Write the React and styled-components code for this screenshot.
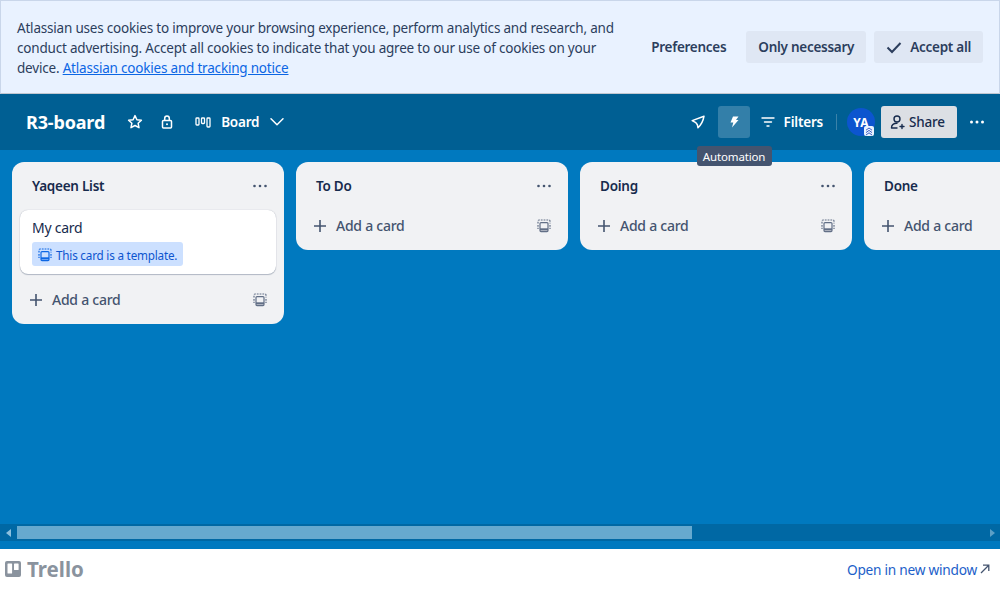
import React from 'react'
import styled, { createGlobalStyle } from 'styled-components'

const GlobalStyle = createGlobalStyle`
  html, body { margin: 0; padding: 0; height: 100%; overflow: hidden; }
  body { font-family: "Noto Sans", "Open Sans", "Liberation Sans", sans-serif; color: #172b4d; }
  * { box-sizing: border-box; }
`

const Page = styled.div`
  display: flex;
  flex-direction: column;
  width: 1000px;
  height: 589px;
  overflow: hidden;
`

const Banner = styled.div`
  display: flex;
  align-items: center;
  justify-content: space-between;
  height: 94px;
  padding: 0 16px;
  background: #e9f2ff;
  border: 1px solid #c9d6ea;
  border-bottom-color: #c1c7d0;
`
const BannerText = styled.p`
  width: 610px;
  margin: 2px 0 0;
  font-size: 13.5px;
  line-height: 20px;
  letter-spacing: -0.2px;
  color: #2c3e5d;
`
const NoticeLink = styled.a`
  color: #0c66e4;
  text-decoration: underline;
`
const BannerActions = styled.div`
  display: flex;
  align-items: center;
  gap: 8px;
`
const BannerButton = styled.button`
  display: flex;
  align-items: center;
  gap: 8px;
  height: 32px;
  padding: 0 12px;
  border: 0;
  border-radius: 3px;
  background: ${p => (p.$plain ? 'transparent' : '#dfe7f4')};
  color: #2c3e5d;
  font: 600 13.5px "Noto Sans", sans-serif;
  letter-spacing: -0.27px;
  white-space: nowrap;
`

const Header = styled.div`
  display: flex;
  align-items: center;
  justify-content: space-between;
  height: 56px;
  padding: 0 15px 0 26px;
  background: #005f93;
  color: #fff;
`
const HeaderGroup = styled.div`
  display: flex;
  align-items: center;
`
const BoardName = styled.div`
  font-size: 18px;
  font-weight: 700;
  letter-spacing: -0.15px;
  margin-right: 22px;
`
const HeaderIcon = styled.span`
  display: flex;
  align-items: center;
  justify-content: center;
  margin-left: ${p => p.$ml || 0}px;
  margin-right: ${p => p.$mr || 0}px;
`
const HeaderLabel = styled.span`
  font-size: 13.5px;
  font-weight: 600;
  letter-spacing: -0.2px;
`
const AutomationButton = styled.div`
  position: relative;
  display: flex;
  align-items: center;
  justify-content: center;
  width: 32px;
  height: 32px;
  margin-left: 12px;
  border-radius: 3px;
  background: #337fa9;
`
const Tooltip = styled.div`
  position: absolute;
  top: 40px;
  left: -21px;
  z-index: 3;
  width: 75px;
  height: 20px;
  border-radius: 3px;
  background: #44546f;
  color: #fff;
  font-size: 11.5px;
  line-height: 21px;
  letter-spacing: -0.15px;
  text-align: center;
  white-space: nowrap;
`
const Divider = styled.div`
  width: 1px;
  height: 16px;
  margin: 0 10px 0 13px;
  background: #3b82a9;
`
const Avatar = styled.div`
  position: relative;
  display: flex;
  align-items: center;
  justify-content: center;
  width: 28px;
  height: 28px;
  border-radius: 50%;
  background: #0c55cf;
  font-size: 12px;
  font-weight: 700;
  letter-spacing: 0.2px;
`
const AvatarBadge = styled.span`
  position: absolute;
  right: 1px;
  bottom: 0;
  display: flex;
  width: 10px;
  height: 10px;
  border-radius: 2px;
  background: #e9f2ff;
`
const ShareButton = styled.div`
  display: flex;
  align-items: center;
  gap: 3px;
  width: 76px;
  height: 32px;
  margin-left: 6px;
  padding-left: 9px;
  border-radius: 3px;
  background: #dcdfe4;
  color: #172b4d;
  font-size: 13.5px;
  font-weight: 500;
  letter-spacing: -0.2px;
`

const Board = styled.div`
  flex: 1;
  display: flex;
  flex-direction: column;
  min-height: 0;
  background: #0079bf;
  padding-bottom: 8px;
`
const Lists = styled.div`
  flex: 1;
  display: flex;
  align-items: flex-start;
  gap: 12px;
  padding: 12px 0 0 12px;
  overflow: hidden;
`
const List = styled.section`
  flex: 0 0 272px;
  padding-bottom: 8px;
  border-radius: 12px;
  background: #f1f2f4;
`
const ListHeader = styled.div`
  display: flex;
  align-items: center;
  justify-content: space-between;
  height: 47px;
  margin-bottom: 1px;
  padding: 0 16px 0 20px;
  font-size: 13.5px;
  font-weight: 600;
  letter-spacing: -0.25px;
  color: #172b4d;
`
const Card = styled.div`
  margin: 0 8px 4px;
  height: 64px;
  padding: 8px 12px;
  border-radius: 8px;
  background: #fff;
  box-shadow: 0 1px 1px #091e4240, 0 0 1px #091e424f;
  font-size: 14px;
  line-height: 20px;
  letter-spacing: -0.25px;
`
const TemplateBadge = styled.div`
  display: inline-flex;
  align-items: center;
  gap: 4px;
  height: 24px;
  margin-top: 4px;
  padding: 1px 6px 0 6px;
  border-radius: 3px;
  background: #cce0ff;
  color: #0c55cf;
  font-size: 11.7px;
  letter-spacing: -0.2px;
`
const ListFooter = styled.div`
  display: flex;
  align-items: center;
  justify-content: space-between;
  height: 32px;
  margin: 0 8px;
  padding: 0 9px 1px 9px;
  margin-top: ${p => (p.$afterCard ? 10 : 0)}px;
  color: #44546f;
  font-size: 14px;
  font-weight: 500;
  letter-spacing: -0.25px;
`
const AddCard = styled.span`
  display: flex;
  align-items: center;
  gap: 9px;
`

const ScrollTrack = styled.div`
  display: flex;
  align-items: stretch;
  height: 17px;
  background: #0068a4;
`
const ScrollArrow = styled.div`
  flex: 0 0 17px;
  display: flex;
  align-items: center;
  justify-content: center;
`
const ScrollThumb = styled.div`
  flex: 0 0 675px;
  margin: 2px 0;
  background: #66a9cf;
`
const ScrollGap = styled.div`
  flex: 1;
`

const Footer = styled.footer`
  display: flex;
  align-items: center;
  justify-content: space-between;
  height: 40px;
  padding: 0 10px 0 5px;
  background: #fff;
`
const Logo = styled.div`
  display: flex;
  align-items: center;
  gap: 6px;
  color: #8a939e;
  font-size: 20.5px;
  font-weight: 700;
`
const OpenLink = styled.a`
  display: flex;
  align-items: center;
  gap: 3px;
  color: #1d5fc9;
  font-size: 13.7px;
  letter-spacing: -0.25px;
  text-decoration: none;
`

const Star = () => (
  <svg width="16" height="16" viewBox="0 0 16 16" fill="none" stroke="#fff" strokeWidth="1.5" strokeLinejoin="round">
    <path d="M8 1.6l1.9 4.1 4.5.5-3.3 3 .9 4.5L8 11.5l-4 2.2.9-4.5-3.3-3 4.5-.5z" />
  </svg>
)
const Lock = () => (
  <svg width="14" height="16" viewBox="0 0 14 16" fill="none" stroke="#fff" strokeWidth="1.5">
    <rect x="2.5" y="6.5" width="9" height="7.5" rx="1" />
    <path d="M4.7 6.5V4.4a2.3 2.3 0 0 1 4.6 0v2.1" />
    <circle cx="7" cy="10.2" r="1" fill="#fff" stroke="none" />
  </svg>
)
const BoardIcon = () => (
  <svg width="16" height="14" viewBox="0 0 16 14" fill="none" stroke="#fff" strokeWidth="1.3">
    <rect x="1" y="3" width="3" height="7" rx=".8" />
    <rect x="6.5" y="3" width="3" height="5.5" rx=".8" />
    <rect x="12" y="3" width="3" height="9" rx=".8" />
  </svg>
)
const Chevron = () => (
  <svg width="16" height="10" viewBox="0 0 16 10" fill="none" stroke="#fff" strokeWidth="1.5" strokeLinecap="round" strokeLinejoin="round">
    <path d="M2 1.8l6 6 6-6" />
  </svg>
)
const Rocket = () => (
  <svg width="16" height="16" viewBox="0 0 16 16" fill="none" stroke="#fff" strokeWidth="1.5" strokeLinejoin="round">
    <path d="M14 2.2L2.2 6.6l3.6 2 1.6 2.2.6 3C11 11 13.2 7 14 2.2z" />
  </svg>
)
const Bolt = () => (
  <svg width="12" height="14" viewBox="0 0 12 14" fill="#fff">
    <path d="M5 1.5h5.5L8 5h2.5L4 12.5l1.3-5H2.5z" />
  </svg>
)
const FilterIcon = () => (
  <svg width="14" height="12" viewBox="0 0 14 12" fill="none" stroke="#fff" strokeWidth="1.4" strokeLinecap="round">
    <path d="M1 2h12M3.5 6h7M6 10h2" />
  </svg>
)
const Chevrons = () => (
  <svg width="10" height="10" viewBox="0 0 10 10" fill="none" stroke="#3d5fc4" strokeWidth="1">
    <path d="M2 4.2L5 2l3 2.2M2 6.6L5 4.4l3 2.2M2 9L5 6.8 8 9" />
  </svg>
)
const SharePerson = () => (
  <svg width="16" height="16" viewBox="0 0 16 16" fill="none" stroke="#172b4d" strokeWidth="1.4" strokeLinecap="round">
    <circle cx="7" cy="5" r="3" />
    <path d="M1.5 14c0-3 2-4.8 5.5-4.8M7 14H1.5M12 10.5v4M10 12.5h4" />
  </svg>
)
const Dots = ({ color = '#fff', size = 3 }) => (
  <svg width="16" height="6" viewBox="0 0 16 6" fill={color}>
    <circle cx="2.5" cy="3" r={size / 2} />
    <circle cx="8" cy="3" r={size / 2} />
    <circle cx="13.5" cy="3" r={size / 2} />
  </svg>
)
const Check = () => (
  <svg width="16" height="16" viewBox="0 0 16 16" fill="none" stroke="#2c3e5d" strokeWidth="2">
    <path d="M1.5 8.5l4.5 4.5L14.5 4" />
  </svg>
)
const Plus = () => (
  <svg width="14" height="14" viewBox="0 0 14 14" stroke="#44546f" strokeWidth="1.6">
    <path d="M7 1v12M1 7h12" />
  </svg>
)
const TemplateIcon = ({ color }) => (
  <svg width="14" height="14" viewBox="0 0 14 14" fill="none" stroke={color} strokeWidth="1.2">
    <path d="M1 4.5V2.2Q1 1 2.2 1h9.6Q13 1 13 2.2v2.3" strokeDasharray="1.8 1" />
    <path d="M1 6v4M13 6v4" strokeDasharray="1.8 1" />
    <rect x="3" y="3.6" width="8" height="9" rx="1" />
    <path d="M3 10.4h8" strokeWidth="2.2" />
  </svg>
)
const ArrowLeft = () => (
  <svg width="6" height="8" viewBox="0 0 6 8" fill="#8cc0de"><path d="M5 0v8L0 4z" /></svg>
)
const ArrowRight = () => (
  <svg width="6" height="8" viewBox="0 0 6 8" fill="#5c9fc6"><path d="M1 0v8l5-4z" /></svg>
)
const TrelloMark = () => (
  <svg width="16" height="16" viewBox="0 0 16 16">
    <rect width="16" height="16" rx="2" fill="#8a939e" />
    <rect x="2.5" y="2.5" width="4.6" height="10" rx=".6" fill="#fff" />
    <rect x="9" y="2.5" width="4.6" height="6.5" rx=".6" fill="#fff" />
  </svg>
)
const NewWindow = () => (
  <svg width="10" height="10" viewBox="0 0 10 10" fill="none" stroke="#44546f" strokeWidth="1.3">
    <path d="M1 9l7.5-7.5M3 1.2h5.8V7" />
  </svg>
)

const lists = [
  { title: 'Yaqeen List', card: 'My card' },
  { title: 'To Do' },
  { title: 'Doing' },
  { title: 'Done' },
]

export default function App() {
  return (
    <Page>
      <GlobalStyle />
      <Banner>
        <BannerText>
          Atlassian uses cookies to improve your browsing experience, perform analytics and research, and
          conduct advertising. Accept all cookies to indicate that you agree to our use of cookies on your
          device. <NoticeLink href="#notice">Atlassian cookies and tracking notice</NoticeLink>
        </BannerText>
        <BannerActions>
          <BannerButton $plain>Preferences</BannerButton>
          <BannerButton>Only necessary</BannerButton>
          <BannerButton><Check />Accept all</BannerButton>
        </BannerActions>
      </Banner>

      <Header>
        <HeaderGroup>
          <BoardName>R3-board</BoardName>
          <HeaderIcon $mr={17}><Star /></HeaderIcon>
          <HeaderIcon $mr={21}><Lock /></HeaderIcon>
          <HeaderIcon $mr={10}><BoardIcon /></HeaderIcon>
          <HeaderLabel>Board</HeaderLabel>
          <HeaderIcon $ml={10}><Chevron /></HeaderIcon>
        </HeaderGroup>
        <HeaderGroup>
          <Rocket />
          <AutomationButton>
            <Bolt />
            <Tooltip>Automation</Tooltip>
          </AutomationButton>
          <HeaderIcon $ml={11} $mr={9}><FilterIcon /></HeaderIcon>
          <HeaderLabel>Filters</HeaderLabel>
          <Divider />
          <Avatar>
            YA
            <AvatarBadge><Chevrons /></AvatarBadge>
          </Avatar>
          <ShareButton><SharePerson />Share</ShareButton>
          <HeaderIcon $ml={12}><Dots /></HeaderIcon>
        </HeaderGroup>
      </Header>

      <Board>
        <Lists>
          {lists.map(list => (
            <List key={list.title}>
              <ListHeader>
                {list.title}
                <Dots color="#44546f" size={2.6} />
              </ListHeader>
              {list.card && (
                <Card>
                  {list.card}
                  <div>
                    <TemplateBadge>
                      <TemplateIcon color="#0c66e4" />
                      This card is a template.
                    </TemplateBadge>
                  </div>
                </Card>
              )}
              <ListFooter $afterCard={!!list.card}>
                <AddCard><Plus />Add a card</AddCard>
                <TemplateIcon color="#626f86" />
              </ListFooter>
            </List>
          ))}
        </Lists>
        <ScrollTrack>
          <ScrollArrow><ArrowLeft /></ScrollArrow>
          <ScrollThumb />
          <ScrollGap />
          <ScrollArrow><ArrowRight /></ScrollArrow>
        </ScrollTrack>
      </Board>

      <Footer>
        <Logo><TrelloMark />Trello</Logo>
        <OpenLink href="#open">Open in new window <NewWindow /></OpenLink>
      </Footer>
    </Page>
  )
}
